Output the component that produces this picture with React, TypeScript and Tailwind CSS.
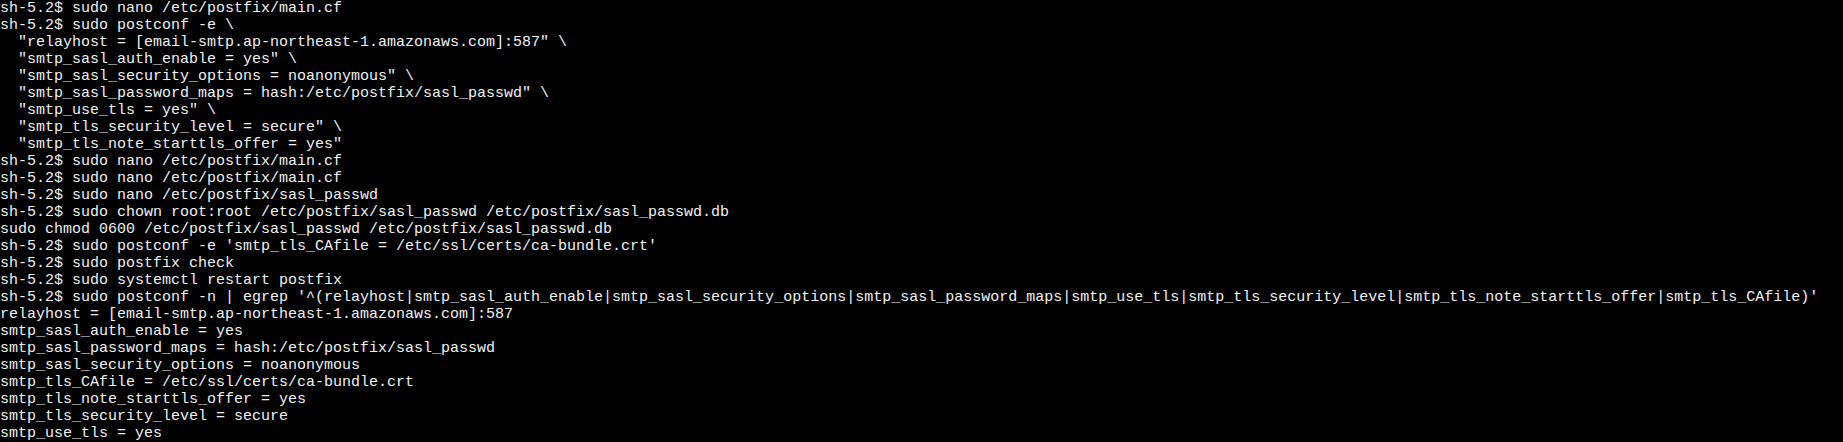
import React from "react";

const lines: string[] = [
  "sh-5.2$ sudo nano /etc/postfix/main.cf",
  "sh-5.2$ sudo postconf -e \\",
  '  "relayhost = [email-smtp.ap-northeast-1.amazonaws.com]:587" \\',
  '  "smtp_sasl_auth_enable = yes" \\',
  '  "smtp_sasl_security_options = noanonymous" \\',
  '  "smtp_sasl_password_maps = hash:/etc/postfix/sasl_passwd" \\',
  '  "smtp_use_tls = yes" \\',
  '  "smtp_tls_security_level = secure" \\',
  '  "smtp_tls_note_starttls_offer = yes"',
  "sh-5.2$ sudo nano /etc/postfix/main.cf",
  "sh-5.2$ sudo nano /etc/postfix/main.cf",
  "sh-5.2$ sudo nano /etc/postfix/sasl_passwd",
  "sh-5.2$ sudo chown root:root /etc/postfix/sasl_passwd /etc/postfix/sasl_passwd.db",
  "sudo chmod 0600 /etc/postfix/sasl_passwd /etc/postfix/sasl_passwd.db",
  "sh-5.2$ sudo postconf -e 'smtp_tls_CAfile = /etc/ssl/certs/ca-bundle.crt'",
  "sh-5.2$ sudo postfix check",
  "sh-5.2$ sudo systemctl restart postfix",
  "sh-5.2$ sudo postconf -n | egrep '^(relayhost|smtp_sasl_auth_enable|smtp_sasl_security_options|smtp_sasl_password_maps|smtp_use_tls|smtp_tls_security_level|smtp_tls_note_starttls_offer|smtp_tls_CAfile)'",
  "relayhost = [email-smtp.ap-northeast-1.amazonaws.com]:587",
  "smtp_sasl_auth_enable = yes",
  "smtp_sasl_password_maps = hash:/etc/postfix/sasl_passwd",
  "smtp_sasl_security_options = noanonymous",
  "smtp_tls_CAfile = /etc/ssl/certs/ca-bundle.crt",
  "smtp_tls_note_starttls_offer = yes",
  "smtp_tls_security_level = secure",
  "smtp_use_tls = yes",
];

export default function App() {
  return (
    <div className="w-[1843px] h-[442px] bg-black overflow-hidden">
      <pre className="m-0 text-[#f2f2f2] text-[15px] leading-[17px] font-['Liberation_Mono','Courier_New',monospace] whitespace-pre">
        {lines.map((l, i) => (
          <div key={i} className="h-[17px]">{l}</div>
        ))}
      </pre>
    </div>
  );
}
